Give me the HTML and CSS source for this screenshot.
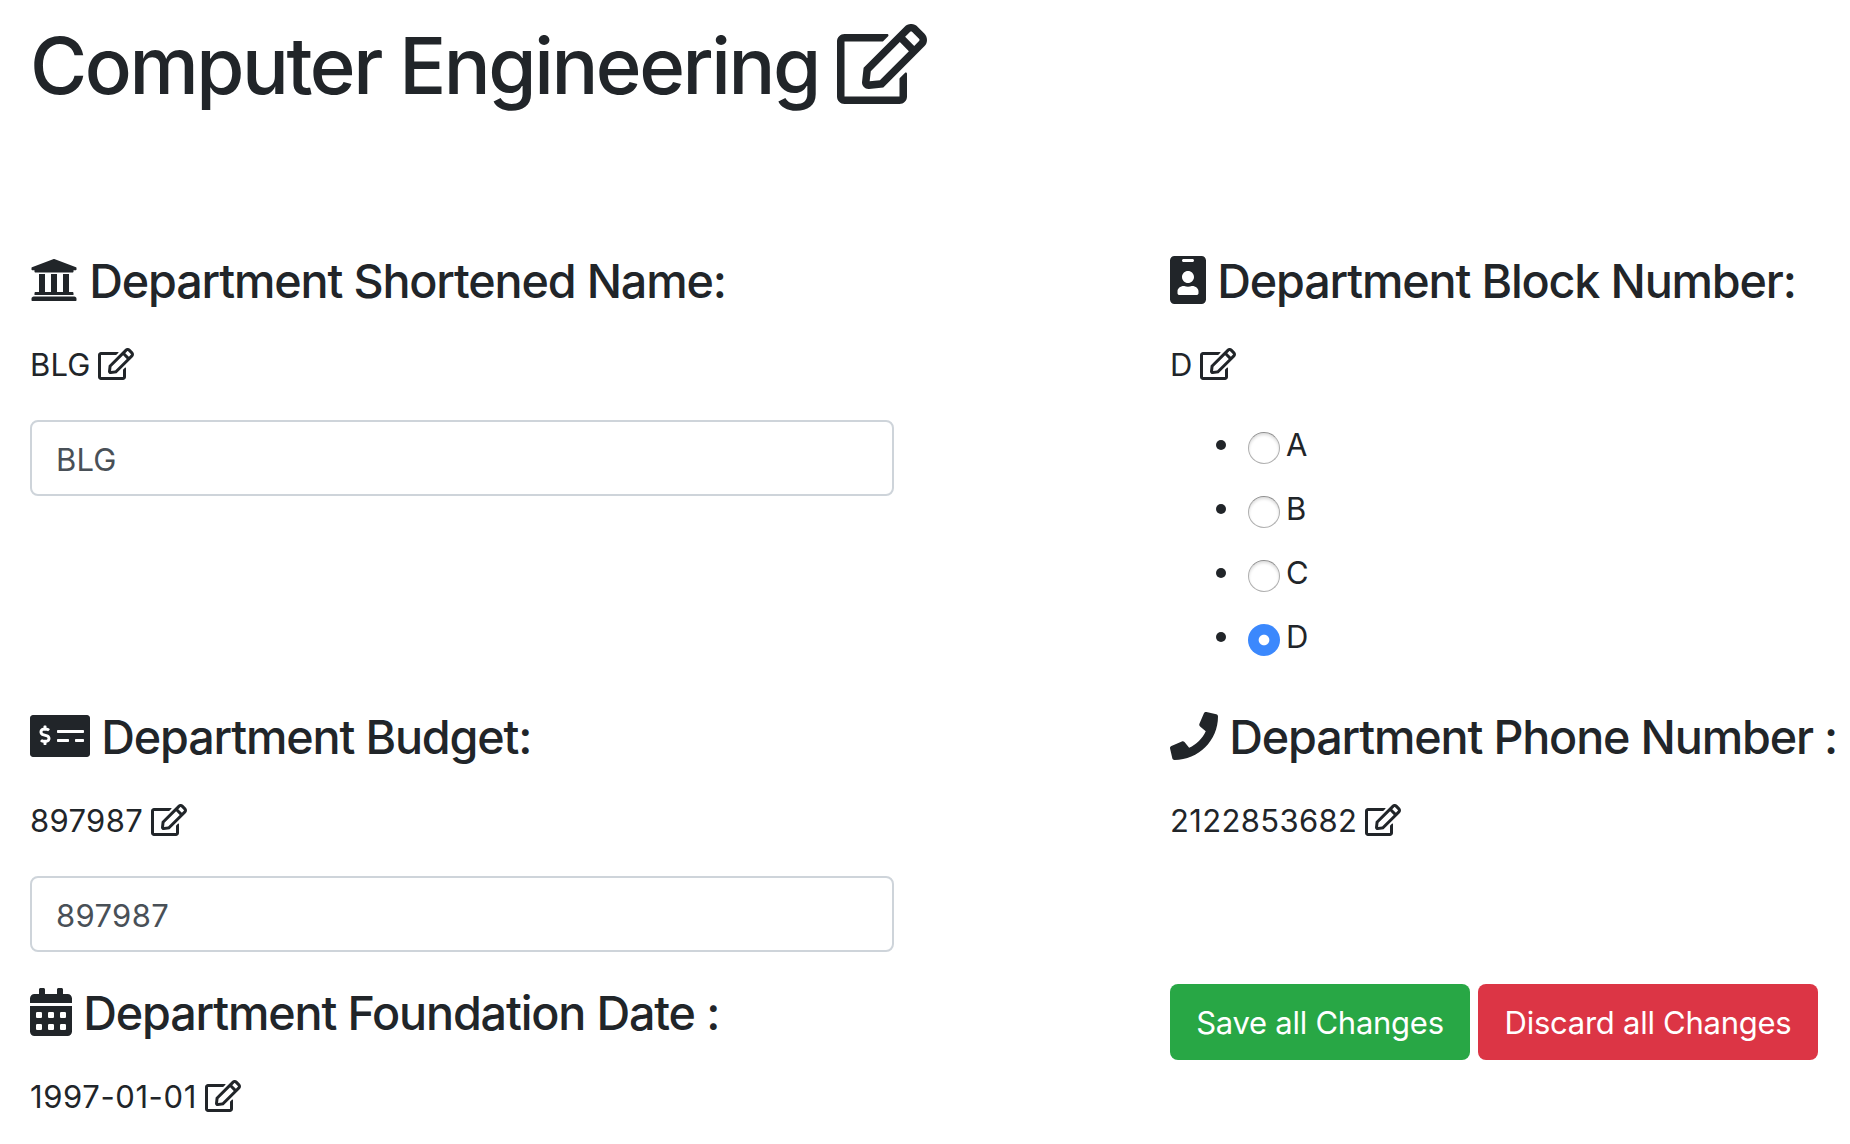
FILE: index.html
```html
<!DOCTYPE html>
<html lang="en">
<head>
<meta charset="utf-8">
<title>Computer Engineering</title>
<link rel="stylesheet" href="styles.css">
</head>
<body>
<svg class="sprite" aria-hidden="true">
  <symbol id="edit" viewBox="0 0 576 512"><path d="M402.3 344.9l32-32c5-5 13.7-1.5 13.7 5.7V464c0 26.5-21.5 48-48 48H48c-26.5 0-48-21.5-48-48V112c0-26.5 21.5-48 48-48h273.5c7.1 0 10.7 8.6 5.7 13.7l-32 32c-1.5 1.5-3.5 2.3-5.7 2.3H48v352h352V350.5c0-2.1.8-4.1 2.3-5.6zm156.6-201.8L296.3 405.7l-90.4 10c-26.2 2.9-48.5-19.2-45.6-45.6l10-90.4L432.9 17.1c22.9-22.9 59.9-22.9 82.7 0l43.2 43.2c22.9 22.9 22.9 60 .1 82.8zM460.1 174L402 115.9 216.2 301.8l-7.3 65.3 65.3-7.3L460.1 174zm64.8-79.7l-43.2-43.2c-4.1-4.1-10.8-4.1-14.8 0L436 82l58.1 58.1 30.9-30.9c4-4.2 4-10.8-.1-14.9z"/></symbol>
</svg>
<main class="page">
  <h1 class="title">Computer Engineering <svg class="icon icon-edit"><use href="#edit"/></svg></h1>
  <div class="fields">
    <section class="field">
      <h4 class="label"><svg class="icon" viewBox="0 0 512 512"><path d="M496 128v16a8 8 0 0 1-8 8h-24v12c0 6.627-5.373 12-12 12H60c-6.627 0-12-5.373-12-12v-12H24a8 8 0 0 1-8-8v-16a8 8 0 0 1 4.941-7.392l232-88a7.996 7.996 0 0 1 6.118 0l232 88A8 8 0 0 1 496 128zm-24 304H40c-13.255 0-24 10.745-24 24v16a8 8 0 0 0 8 8h464a8 8 0 0 0 8-8v-16c0-13.255-10.745-24-24-24zM96 192v192H60c-6.627 0-12 5.373-12 12v20h416v-20c0-6.627-5.373-12-12-12h-36V192h-64v192h-64V192h-64v192h-64V192H96z"/></svg> Department Shortened Name:</h4>
      <p class="value value-code">BLG <svg class="icon icon-edit"><use href="#edit"/></svg></p>
      <input class="control control-code" type="text" value="BLG">
    </section>
    <section class="field">
      <h4 class="label"><svg class="icon icon-badge" viewBox="0 0 384 512"><path d="M336 0H48C21.5 0 0 21.5 0 48v416c0 26.5 21.5 48 48 48h288c26.5 0 48-21.5 48-48V48c0-26.5-21.5-48-48-48zM144 32h96c8.800 0 16 7.200 16 16s-7.200 16-16 16h-96c-8.800 0-16-7.200-16-16s7.200-16 16-16zm48 128c35.300 0 64 28.700 64 64s-28.700 64-64 64-64-28.700-64-64 28.700-64 64-64zm112 236.800c0 10.600-10 19.200-22.400 19.200H102.400C90 416 80 407.400 80 396.800v-19.200c0-31.800 30.100-57.600 67.200-57.600h5c12.300 5.100 25.700 8 39.800 8s27.600-2.900 39.800-8h5c37.100 0 67.200 25.800 67.200 57.600v19.200z"/></svg> Department Block Number:</h4>
      <p class="value value-code">D <svg class="icon icon-edit"><use href="#edit"/></svg></p>
      <ul class="choices">
        <li><label><input class="radio" type="radio" name="block"><span>A</span></label></li>
        <li><label><input class="radio" type="radio" name="block"><span>B</span></label></li>
        <li><label><input class="radio" type="radio" name="block"><span>C</span></label></li>
        <li><label><input class="radio" type="radio" name="block" checked><span>D</span></label></li>
      </ul>
    </section>
    <section class="field">
      <h4 class="label"><svg class="icon icon-check" viewBox="0 0 640 512"><path d="M608 32H32C14.330 32 0 46.330 0 64v384c0 17.670 14.330 32 32 32h576c17.670 0 32-14.330 32-32V64c0-17.670-14.330-32-32-32zM176 327.880V344c0 4.420-3.580 8-8 8h-16c-4.420 0-8-3.580-8-8v-16.290c-11.290-.58-22.270-4.520-31.370-11.350-3.900-2.930-4.100-8.770-.57-12.140l11.750-11.210c2.770-2.640 6.890-2.760 10.130-.73 3.870 2.420 8.260 3.720 12.820 3.720h28.110c6.500 0 11.800-5.920 11.800-13.190 0-5.950-3.610-11.190-8.770-12.730l-45-13.500c-18.590-5.580-31.580-23.420-31.580-43.390 0-24.520 19.050-44.440 42.670-45.070V152c0-4.420 3.580-8 8-8h16c4.420 0 8 3.580 8 8v16.290c11.290.58 22.270 4.510 31.370 11.350 3.900 2.930 4.100 8.770.57 12.140l-11.750 11.210c-2.770 2.640-6.890 2.760-10.130.73-3.870-2.430-8.260-3.720-12.820-3.720h-28.110c-6.500 0-11.800 5.920-11.800 13.190 0 5.950 3.610 11.190 8.770 12.730l45 13.500c18.590 5.580 31.580 23.420 31.580 43.390 0 24.530-19.050 44.440-42.670 45.070zM416 312c0 4.420-3.580 8-8 8H296c-4.420 0-8-3.580-8-8v-16c0-4.420 3.580-8 8-8h112c4.420 0 8 3.580 8 8v16zm160 0c0 4.420-3.580 8-8 8h-80c-4.420 0-8-3.580-8-8v-16c0-4.420 3.580-8 8-8h80c4.420 0 8 3.580 8 8v16zm0-96c0 4.420-3.580 8-8 8H296c-4.420 0-8-3.580-8-8v-16c0-4.420 3.580-8 8-8h272c4.420 0 8 3.580 8 8v16z"/></svg> Department Budget:</h4>
      <p class="value">897987 <svg class="icon icon-edit"><use href="#edit"/></svg></p>
      <input class="control" type="text" value="897987">
    </section>
    <section class="field">
      <h4 class="label"><svg class="icon" viewBox="0 0 512 512"><path d="M493.4 24.600l-104-24c-11.300-2.600-22.900 3.300-27.500 13.900l-48 112c-4.200 9.800-1.400 21.300 6.900 28l60.600 49.600c-36 76.700-98.900 140.500-177.200 177.200l-49.600-60.600c-6.800-8.300-18.200-11.100-28-6.900l-112 48C3.900 366.500-2 378.100.6 389.400l24 104C27.100 504.200 36.700 512 48 512c256.100 0 464-207.500 464-464 0-11.200-7.700-20.900-18.600-23.400z"/></svg> Department Phone Number :</h4>
      <p class="value">2122853682 <svg class="icon icon-edit"><use href="#edit"/></svg></p>
    </section>
    <section class="field">
      <h4 class="label"><svg class="icon icon-calendar" viewBox="0 0 448 512"><path fill-rule="evenodd" d="M0 464c0 26.500 21.500 48 48 48h352c26.500 0 48-21.500 48-48V192H0zM76 256h40q12 0 12 12v40q0 12-12 12H76q-12 0-12-12v-40q0-12 12-12zM204 256h40q12 0 12 12v40q0 12-12 12h-40q-12 0-12-12v-40q0-12 12-12zM332 256h40q12 0 12 12v40q0 12-12 12h-40q-12 0-12-12v-40q0-12 12-12zM76 384h40q12 0 12 12v40q0 12-12 12H76q-12 0-12-12v-40q0-12 12-12zM204 384h40q12 0 12 12v40q0 12-12 12h-40q-12 0-12-12v-40q0-12 12-12zM332 384h40q12 0 12 12v40q0 12-12 12h-40q-12 0-12-12v-40q0-12 12-12zM400 64h-48V16c0-8.800-7.200-16-16-16h-32c-8.800 0-16 7.200-16 16v48H160V16c0-8.800-7.200-16-16-16h-32c-8.800 0-16 7.200-16 16v48H48C21.500 64 0 85.500 0 112v48h448v-48c0-26.500-21.500-48-48-48z"/></svg> Department Foundation Date :</h4>
      <p class="value value-date">1997-01-01 <svg class="icon icon-edit"><use href="#edit"/></svg></p>
    </section>
    <div class="actions">
      <button class="btn btn-save">Save all Changes</button>
      <button class="btn btn-discard">Discard all Changes</button>
    </div>
  </div>
</main>
</body>
</html>
```
FILE: styles.css
```css
* { box-sizing: border-box; }
body {
  margin: 0;
  background: #fff;
  color: #212529;
  font: 400 31px/48px Inter, "Liberation Sans", sans-serif;
  overflow: hidden;
}
.sprite { display: none; }
.page { padding: 17px 0 0 30px; }
.title {
  margin: 0 0 139px;
  height: 96px;
  font-size: 78px;
  font-weight: 500;
  line-height: 97px;
  letter-spacing: -2.45px;
  white-space: nowrap;
}
.fields {
  display: grid;
  grid-template-columns: 1140px 1fr;
  grid-template-rows: 456px 276px auto;
}
.label {
  margin: 0 0 31px;
  height: 57px;
  font-size: 46.7px;
  font-weight: 500;
  line-height: 58px;
  letter-spacing: -1.17px;
  white-space: nowrap;
}
.value {
  margin: 0 0 32px;
  height: 48px;
  line-height: 50px;
  letter-spacing: .35px;
  word-spacing: -1px;
  white-space: nowrap;
}
.value-code, .control.control-code { letter-spacing: .15px; }
.value-date { letter-spacing: .6px; }
.icon {
  width: 1em;
  height: 1em;
  font-size: 48px;
  fill: currentColor;
  vertical-align: -0.125em;
  overflow: visible;
}
.title .icon { font-size: 80px; }
.value .icon { font-size: 32px; }
.icon-edit { width: 1.125em; }
.icon-badge { width: .75em; }
.icon-check { width: 1.25em; }
.icon-calendar { width: .875em; }
.control {
  display: block;
  width: 864px;
  height: 76px;
  padding: 14px 24px 12px;
  border: 2px solid #ced4da;
  border-radius: 8px;
  background: #fff;
  color: #495057;
  font: inherit;
  letter-spacing: .35px;
}
.choices {
  display: flex;
  flex-direction: column;
  gap: 16px;
  margin: 0;
  padding: 0 0 0 46px;
  list-style: none;
}
.choices li, .choices label { display: flex; align-items: center; }
.choices li { height: 48px; }
.choices span { line-height: 46px; padding-top: 2px; }
.choices li::before {
  content: "";
  width: 10px;
  height: 10px;
  margin: 2px 22px 0 0;
  border-radius: 50%;
  background: #212529;
}
.radio {
  appearance: none;
  width: 32px;
  height: 32px;
  margin: 8px 6px 0 0;
  border: 1px solid #b0b0b0;
  border-top-color: #8f8f8f;
  border-radius: 50%;
  background: #fff;
  box-shadow: inset 0 2px 3px #ddd;
}
.radio:checked {
  border: 0;
  background: radial-gradient(circle, #fff 4.8px, #3b88fd 5.8px);
  box-shadow: none;
}
.actions { display: flex; gap: 8px; }
.btn {
  height: 76px;
  padding: 2px 0 0;
  border: 0;
  border-radius: 8px;
  color: #fff;
  font: inherit;
  letter-spacing: -.26px;
  white-space: nowrap;
}
.btn-save { width: 300px; background: #28a745; }
.btn-discard { width: 340px; background: #dc3545; }
```
